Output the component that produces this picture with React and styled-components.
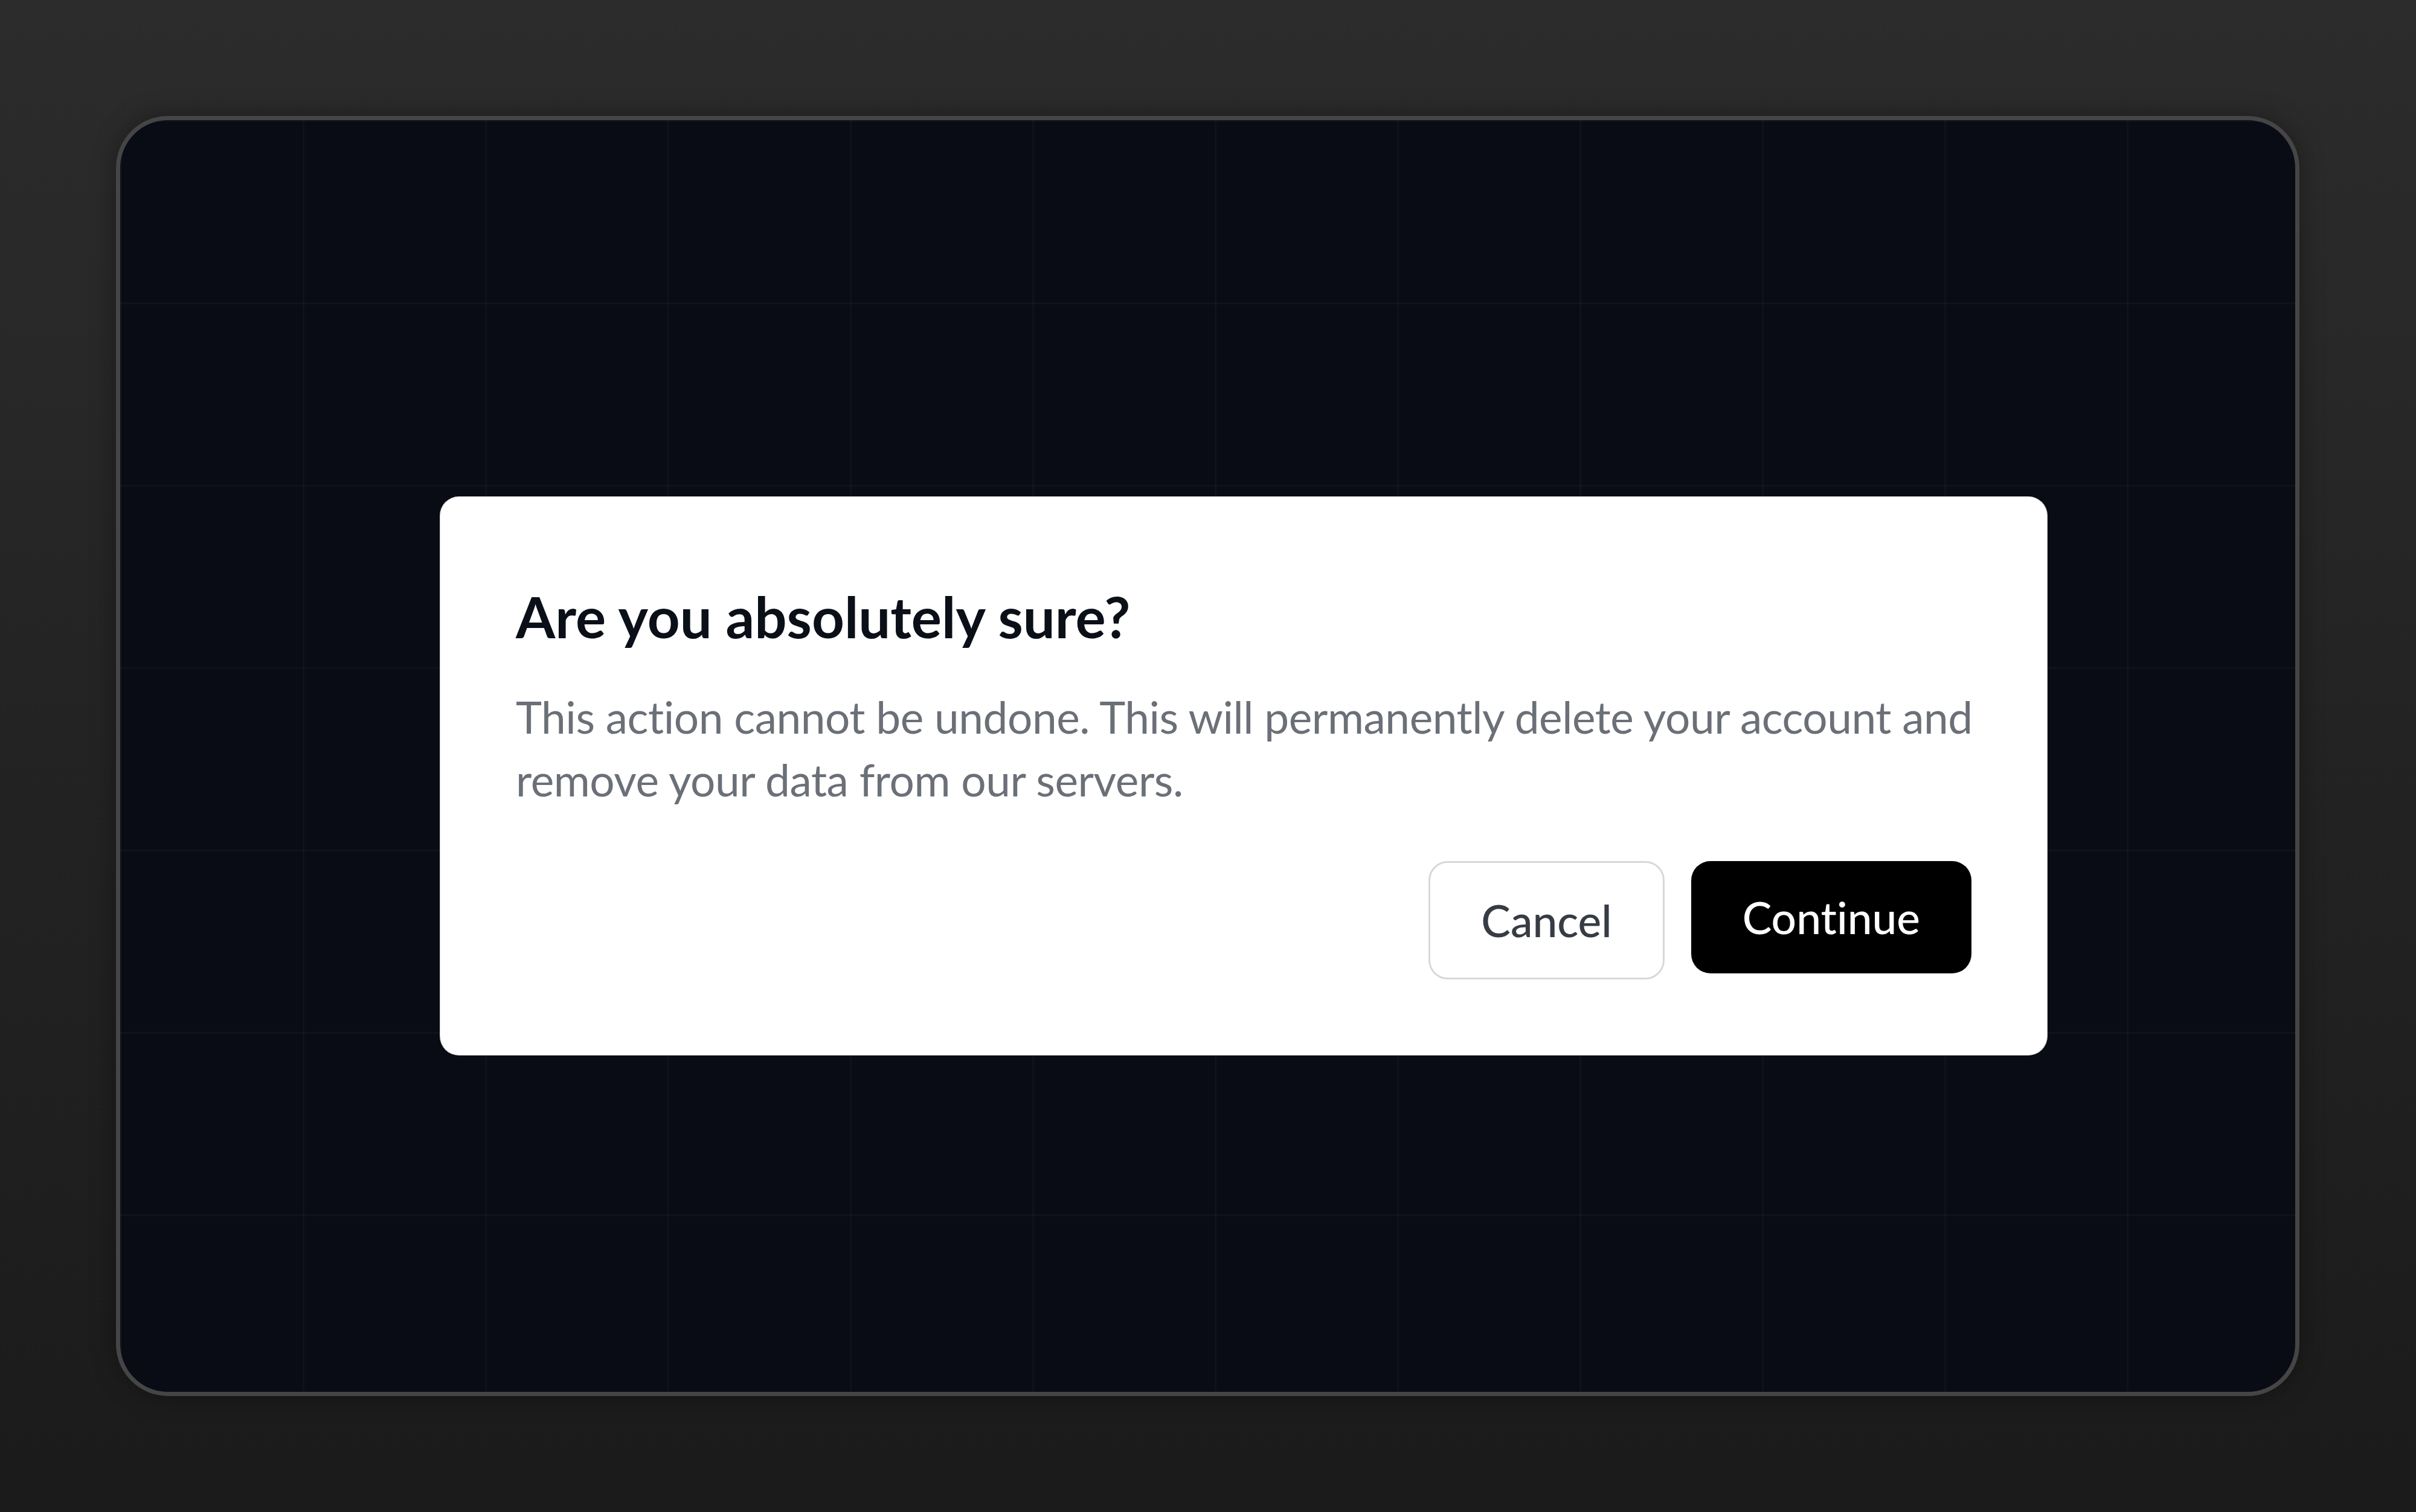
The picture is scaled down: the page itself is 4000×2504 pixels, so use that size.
import styled, { createGlobalStyle } from "styled-components";

const GlobalStyle = createGlobalStyle`
  html, body {
    margin: 0;
    padding: 0;
  }
  body {
    width: 4000px;
    height: 2504px;
    background: linear-gradient(180deg, #2c2c2c 0%, #232323 50%, #1b1b1b 100%);
    font-family: "Lato", "Noto Sans", sans-serif;
    font-variant-ligatures: none;
    -webkit-font-smoothing: antialiased;
  }
`;

const Page = styled.main`
  box-sizing: border-box;
  width: 4000px;
  height: 2504px;
  padding: 192px 193px 192px 192px;
  display: flex;
`;

const Frame = styled.section`
  box-sizing: border-box;
  flex: 1;
  border: 7px solid #454545;
  border-radius: 86px;
  background-color: #090c14;
  background-image:
    linear-gradient(to right, rgba(255, 255, 255, 0.022) 3px, transparent 3px),
    linear-gradient(to bottom, rgba(255, 255, 255, 0.022) 3px, transparent 3px);
  background-size: 302px 302px;
  background-position: 0 0;
  box-shadow: 0 0 40px rgba(0, 0, 0, 0.35);
  padding: 624px 0 0 530px;
  display: flex;
  align-items: flex-start;
  overflow: hidden;
`;

const Dialog = styled.div`
  box-sizing: border-box;
  width: 2660px;
  padding: 125px;
  background: #ffffff;
  border-radius: 31px;
  box-shadow: 0 0 0 1px #cfd1d4;
  display: flex;
  flex-direction: column;
  gap: 83px;
`;

const Header = styled.div`
  display: flex;
  flex-direction: column;
  gap: 41px;
`;

const Title = styled.h2`
  margin: 0;
  font-size: 94px;
  line-height: 146px;
  font-weight: 700;
  color: #0b0f18;
`;

const Description = styled.p`
  margin: 0;
  font-size: 73px;
  line-height: 104px;
  font-weight: 400;
  letter-spacing: -0.45px;
  color: #6b7078;
  white-space: nowrap;
`;

const Footer = styled.div`
  display: flex;
  justify-content: flex-end;
  align-items: flex-start;
  gap: 44px;
`;

const Button = styled.button`
  box-sizing: border-box;
  display: inline-flex;
  align-items: center;
  justify-content: center;
  font-family: "Lato", "Noto Sans", sans-serif;
  font-variant-ligatures: none;
  font-size: 73px;
  font-weight: 500;
  line-height: 1;
  border-radius: 32px;
  cursor: pointer;
  height: ${(p) => (p.$outline ? "196px" : "186px")};
  padding: ${(p) => (p.$outline ? "0 84px" : "0 85px")};
  background: ${(p) => (p.$outline ? "#ffffff" : "#000000")};
  color: ${(p) => (p.$outline ? "#373c44" : "#ffffff")};
  border: ${(p) => (p.$outline ? "3px solid #d6d8db" : "none")};
`;

export default function App() {
  return (
    <>
      <GlobalStyle />
      <Page>
        <Frame>
          <Dialog role="alertdialog">
            <Header>
              <Title>Are you absolutely sure?</Title>
              <Description>
                This action cannot be undone. This will permanently delete your account and
                <br />
                remove your data from our servers.
              </Description>
            </Header>
            <Footer>
              <Button $outline>Cancel</Button>
              <Button>Continue</Button>
            </Footer>
          </Dialog>
        </Frame>
      </Page>
    </>
  );
}
